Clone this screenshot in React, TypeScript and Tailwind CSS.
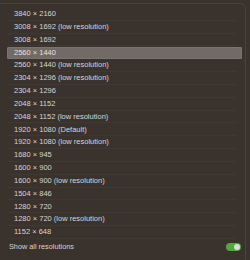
const RESOLUTIONS = [
  "3840 × 2160",
  "3008 × 1692 (low resolution)",
  "3008 × 1692",
  "2560 × 1440",
  "2560 × 1440 (low resolution)",
  "2304 × 1296 (low resolution)",
  "2304 × 1296",
  "2048 × 1152",
  "2048 × 1152 (low resolution)",
  "1920 × 1080 (Default)",
  "1920 × 1080 (low resolution)",
  "1680 × 945",
  "1600 × 900",
  "1600 × 900 (low resolution)",
  "1504 × 846",
  "1280 × 720",
  "1280 × 720 (low resolution)",
  "1152 × 648",
];

const SELECTED = 3;

export default function App() {
  return (
    <div
      className="w-[250px] h-[260px] overflow-hidden bg-[#3a322d] text-[#d9d5d1]"
      style={{ fontFamily: '"Liberation Sans", Arial, sans-serif' }}
    >
      <div className="ml-[-10px] mt-[3px] w-[256px] h-[270px] rounded-[6px] border border-[#4a423d] bg-[#3a322d]">
        {/* resolution list */}
        <div className="pt-[4px] pl-[16px] pr-[3px]">
          {RESOLUTIONS.map((r, i) => (
            <div key={r} className="h-[12.83px] flex items-center">
              {i === SELECTED ? (
                <div className="w-full h-[12px] flex items-center pl-[6px] bg-[#716a66] border border-[#7a7370] rounded-[1px] text-[#e6e2df]">
                  <span className="text-[7.5px] leading-none">{r}</span>
                </div>
              ) : (
                <div className="w-full h-full flex items-center pl-[7px] border-b border-white/[0.03] mr-[5px]">
                  <span className="text-[7.5px] leading-none">{r}</span>
                </div>
              )}
            </div>
          ))}
        </div>

        {/* show all toggle */}
        <div className="mt-[2px] pl-[18px] pr-[4px] h-[12px] flex items-center justify-between">
          <span className="text-[7.3px] leading-none">Show all resolutions</span>
          <div className="w-[15px] h-[8px] rounded-full bg-[#4cab3a] flex items-center justify-end pr-[1px]">
            <div className="w-[6px] h-[6px] rounded-full bg-[#dcdcdc]" />
          </div>
        </div>
      </div>
    </div>
  );
}
